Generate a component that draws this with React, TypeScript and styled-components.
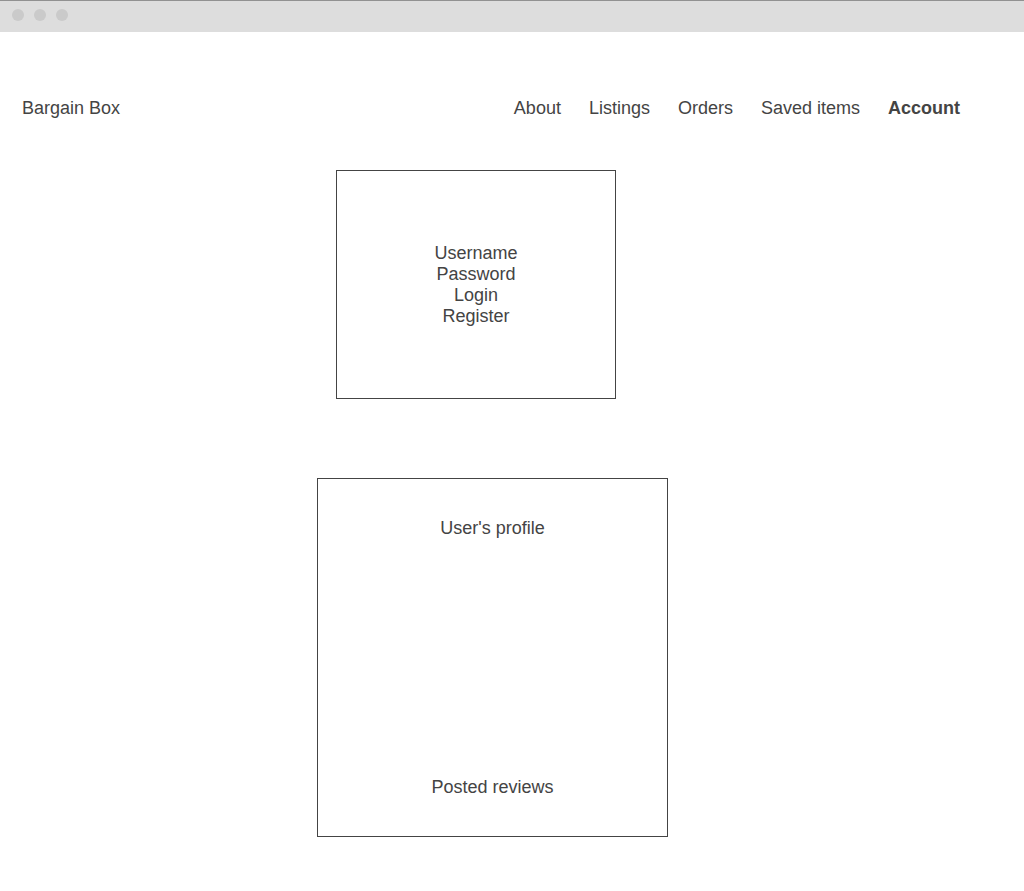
import React from 'react';
import styled, { createGlobalStyle } from 'styled-components';

const ink = '#444444';

const GlobalStyle = createGlobalStyle`
  *, *::before, *::after { box-sizing: border-box; }
  body {
    margin: 0;
    background: #ffffff;
    color: ${ink};
    font: 18px/21px "Liberation Sans", Arial, sans-serif;
  }
`;

const WindowBar = styled.div`
  display: flex;
  gap: 10px;
  height: 32px;
  padding: 8px 12px;
  border-top: 1px solid #919191;
  background: #dddddd;
`;

const WindowDot = styled.span`
  width: 12px;
  height: 12px;
  border-radius: 50%;
  background: #cacaca;
`;

const Header = styled.header`
  display: flex;
  align-items: center;
  justify-content: space-between;
  padding: 66px 64px 51px 22px;
`;

const Brand = styled.a`
  color: inherit;
  text-decoration: none;
`;

const Nav = styled.nav`
  display: flex;
  gap: 28px;
`;

const NavLink = styled.a<{ $active?: boolean }>`
  color: inherit;
  font-weight: ${({ $active }) => ($active ? 700 : 400)};
  text-decoration: none;
  white-space: nowrap;
`;

const Main = styled.main`
  display: flex;
  flex-direction: column;
  gap: 79px;
  padding-bottom: 54px;
`;

const Row = styled.div<{ $inset: number }>`
  display: flex;
  justify-content: center;
  padding-right: ${({ $inset }) => $inset}px;
`;

const Card = styled.section<{ $width: number; $height: number; $spread?: boolean }>`
  display: flex;
  flex-direction: column;
  align-items: center;
  justify-content: ${({ $spread }) => ($spread ? 'space-between' : 'center')};
  width: ${({ $width }) => $width}px;
  max-width: 100%;
  min-height: ${({ $height }) => $height}px;
  padding: 39px 20px 38px;
  border: 1px solid ${ink};
`;

const Line = styled.p`
  margin: 0;
`;

const TextButton = styled.button`
  padding: 0;
  border: 0;
  background: none;
  color: inherit;
  font: inherit;
  cursor: pointer;
`;

const pages = ['About', 'Listings', 'Orders', 'Saved items', 'Account'];

export default function App() {
  return (
    <>
      <GlobalStyle />
      <WindowBar aria-hidden="true">
        <WindowDot />
        <WindowDot />
        <WindowDot />
      </WindowBar>
      <Header>
        <Brand href="#home">Bargain Box</Brand>
        <Nav aria-label="Main">
          {pages.map((page) => (
            <NavLink
              key={page}
              href={`#${page.toLowerCase().replace(' ', '-')}`}
              $active={page === 'Account'}
              aria-current={page === 'Account' ? 'page' : undefined}
            >
              {page}
            </NavLink>
          ))}
        </Nav>
      </Header>
      <Main>
        <Row $inset={72}>
          <Card $width={280} $height={229}>
            <Line>Username</Line>
            <Line>Password</Line>
            <TextButton type="button">Login</TextButton>
            <TextButton type="button">Register</TextButton>
          </Card>
        </Row>
        <Row $inset={39}>
          <Card $width={351} $height={359} $spread>
            <Line>User's profile</Line>
            <Line>Posted reviews</Line>
          </Card>
        </Row>
      </Main>
    </>
  );
}
